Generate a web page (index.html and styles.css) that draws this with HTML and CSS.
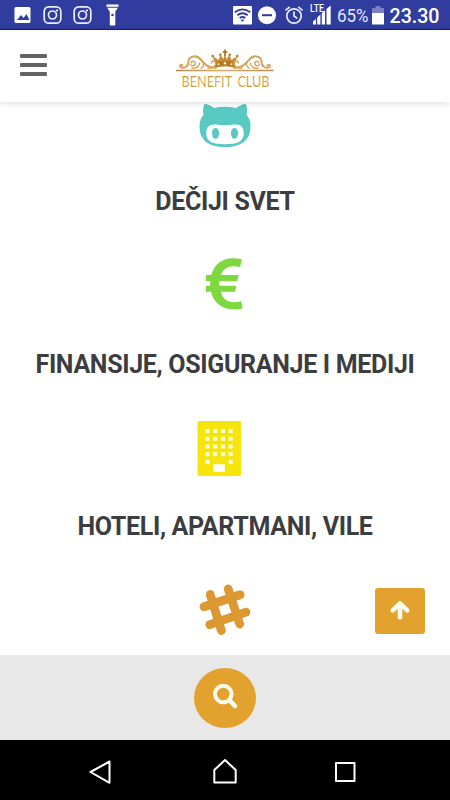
FILE: index.html
```html
<!DOCTYPE html>
<html lang="sr">
<head>
<meta charset="utf-8">
<title>Benefit Club</title>
<link rel="stylesheet" href="styles.css">
</head>
<body>
<div class="screen">
  <div class="status">
    <svg class="status-left" width="120" height="30" viewBox="0 0 120 30">
      <rect x="14.500" y="7" width="16" height="16" rx="1.500" fill="#fff"/>
      <path d="M17 20l4-5 2.500 3 3-4 3 6z" fill="#303c9e"/>
      <g fill="none" stroke="#e9ebff" stroke-width="1.700">
        <rect x="44.200" y="6.800" width="16.600" height="16.400" rx="4.500"/><circle cx="52.500" cy="15" r="4"/>
        <rect x="74.200" y="6.800" width="16.600" height="16.400" rx="4.500"/><circle cx="82.500" cy="15" r="4"/>
      </g>
      <circle cx="57" cy="10.500" r="1.100" fill="#fff"/><circle cx="87" cy="10.500" r="1.100" fill="#fff"/>
      <path d="M106.500 4.500h12v2.300h-12zM107.200 7.800h10.600l-2.500 4V25.500h-5.500V11.800z" fill="#fff"/>
      <circle cx="112.500" cy="15" r="1.300" fill="#303c9e"/>
    </svg>
    <div class="status-right">
      <svg width="110" height="30" viewBox="225 0 110 30">
        <rect x="233" y="6" width="19" height="18.500" rx="1" fill="#fff"/>
        <g fill="none" stroke="#303c9e" stroke-width="1.900"><path d="M234.800 12.200q7.700-5.600 15.400 0M237.300 15.200q5.200-3.900 10.400 0M239.700 18.100q2.800-2.200 5.600 0"/></g>
        <path d="M240.700 19.500h3.600l-1.800 2.500z" fill="#303c9e"/>
        <circle cx="267" cy="15.200" r="9" fill="#fff"/><path d="M262 15.200h10" stroke="#303c9e" stroke-width="2"/>
        <g fill="none" stroke="#e9ebff" stroke-width="1.700"><circle cx="294" cy="16" r="7.200"/><path d="M294 11.500V16l3.300 2.400M285.500 10.300l4.200-3.500M302.500 10.300l-4.200-3.500"/></g>
        <text class="lte" x="310" y="12" textLength="14" lengthAdjust="spacingAndGlyphs">LTE</text>
        <path d="M313 24.500v-3l3-2.500v5.500zM317.200 24.500v-7l3.200-3v10zM321.800 24.500V13.200l3.200-3v14.300zM326.500 24.500V9l4.200-3.500v19z" fill="#fff"/>
      </svg>
      <svg width="115" height="30" viewBox="335 0 115 30">
        <text class="percent" x="337" y="22" textLength="31.500" lengthAdjust="spacingAndGlyphs">65%</text>
        <path d="M372 8h3.500V6h5v2h3.500v5h-12z" fill="#7881c5"/><path d="M372 13h12v11.500h-12z" fill="#fff"/>
        <text class="clock" x="389.500" y="23" textLength="50" lengthAdjust="spacingAndGlyphs">23.30</text>
      </svg>
    </div>
  </div>

  <header class="header">
    <div class="menu"><i></i><i></i><i></i></div>
    <svg class="logo" width="110" height="50" viewBox="170 45 110 50">
      <defs>
        <linearGradient id="gold" x1="0" y1="0" x2="0" y2="1"><stop offset="0" stop-color="#b77a22"/><stop offset=".5" stop-color="#e0b555"/><stop offset="1" stop-color="#b98b35"/></linearGradient>
        <linearGradient id="line" x1="0" y1="0" x2="1" y2="0"><stop offset="0" stop-color="#b88a55"/><stop offset=".5" stop-color="#dfb063"/><stop offset="1" stop-color="#b88a55"/></linearGradient>
      </defs>
      <path d="M215.300 64.500L212.700 56l5.800 4 2-5 3 4 1.500-5 1.500 5 3-4 2 5 5.800-4-2.600 8.500q-9.700-3-19.400 0z" fill="#c78e31"/>
      <path d="M215 62.300q10-3 20 0v5.500q-10-3-20 0z" fill="#b87a20"/>
      <path d="M224.200 49.500h1.600v1.700h1.700v1.500h-1.700v3.500h-1.600v-3.500h-1.700v-1.500h1.700z" fill="#ad6f1b"/>
      <g fill="#b87a20"><circle cx="212.700" cy="56" r="1.300"/><circle cx="220.300" cy="54.700" r="1.300"/><circle cx="229.700" cy="54.700" r="1.300"/><circle cx="237.300" cy="56" r="1.300"/></g>
      <g fill="#fff0c8"><circle cx="218.500" cy="64.200" r="1"/><circle cx="225" cy="63.300" r="1.200"/><circle cx="231.500" cy="64.200" r="1"/></g>
      <g id="scroll" fill="none" stroke="#d4a55b" stroke-linecap="round">
        <path d="M182.500 65.500c-1.200-1.900-3.700.5-1.700 1.800 3.500 1.500 7.700-1.200 7.700-5.600 0-6.200 9-7.200 12.500-1.900 3.500 5 8 8.700 15 7.900" stroke-width="2"/>
        <path d="M190.500 64.500c1.200 2.300 5 1.500 4.800-1.200-.2-2.600-4-2.700-4-.3M196 57c6 1 8 9 16 10.500M201 68.200c2-1.200 3-3.300 2.300-5.200M208 68.200c4.800 0 8.200-2 7.600-5.500-.5-2.500-4.300-2.200-4 .3M192 68.300c5 0 7-1.600 7.500-5" stroke-width="1.400"/>
      </g>
      <use href="#scroll" transform="matrix(-1 0 0 1 450 0)"/>
      <path d="M176 69.800h97.500v1.500H176z" fill="url(#line)"/>
      <text class="brand" x="181.500" y="87" textLength="88" lengthAdjust="spacingAndGlyphs" fill="url(#gold)">BENEFIT CLUB</text>
    </svg>
  </header>

  <main class="list">
    <section class="item">
      <svg width="90" height="60" viewBox="180 95 90 60">
        <path d="M204.500 104c3.300 0 6.700 1.800 9.500 4q11-2.400 22 0c2.800-2.200 6.500-4 9.800-4 1.600 3.500 1.700 7.500.8 10.700 3 3.500 3.900 7.200 3.900 11.300 0 14-8.500 21-25.500 21s-25.500-7-25.500-21c0-4.100 1-7.800 4-11.300-.9-3.200-.7-7.200 1-10.700z" fill="#58c9c3"/>
        <path d="M214 124.500c4 0 7 .8 11 .8s7-.8 11-.8c5 0 7.800 3.300 7.800 8.500 0 9-6.800 11.200-18.800 11.200s-18.800-2.200-18.800-11.200c0-5.200 2.800-8.500 7.800-8.500z" fill="#fff"/>
        <ellipse cx="215.500" cy="133.300" rx="3.600" ry="5.500" fill="#58c9c3"/><ellipse cx="234.500" cy="133.300" rx="3.600" ry="5.500" fill="#58c9c3"/>
      </svg>
      <h2>DEČIJI SVET</h2>
    </section>
    <section class="item">
      <svg width="90" height="60" viewBox="180 258 90 60">
        <path d="M242 259.300l-1.900 7.700q-15.100-3.500-19.300 8h17.700l-1.200 6.200h-18v4.500h17l-1.200 6.100h-14.400c2.800 9.500 10 12 20.500 9.400l1.500 7.300c-16.500 3.600-28.500-3-31.700-16.700h-5v-6.100h4.200v-4.500H206V275h5.200c4.100-14 15.400-19.400 30.800-15.700z" fill="#7ed83f"/>
      </svg>
      <h2>FINANSIJE, OSIGURANJE I MEDIJI</h2>
    </section>
    <section class="item">
      <svg width="90" height="60" viewBox="180 420 90 60">
        <rect x="197.500" y="421" width="43.500" height="55" rx="1.800" fill="#f5e50c"/>
        <path d="M205.500 431h4M213.200 431h4M221 431h4M228.700 431h4M205.500 438.800h4M213.200 438.800h4M221 438.800h4M228.700 438.800h4M205.500 446.600h4M213.200 446.600h4M221 446.600h4M228.700 446.600h4M205.500 454.300h4M213.200 454.300h4M221 454.300h4M228.700 454.300h4M205.500 462h4M228.700 462h4" stroke="#fffde0" stroke-width="4"/>
        <rect x="213.200" y="464.200" width="11.600" height="7.600" rx=".7" fill="#fff"/>
      </svg>
      <h2>HOTELI, APARTMANI, VILE</h2>
    </section>
    <section class="item">
      <svg width="90" height="60" viewBox="180 582.500 90 60">
        <path d="M210.200 594l11.200 36M228.200 588.500l11.500 35M204 606.200l36.200-11.900M209.800 624.200l36.200-12.500" fill="none" stroke="#dc9932" stroke-width="8.800" stroke-linecap="round"/>
      </svg>
    </section>
    <a class="to-top">
      <svg width="50" height="46" viewBox="375 587.500 50 46"><path d="M400 617v-12M392.800 609.800l7.200-7 7.200 7" fill="none" stroke="#fffbed" stroke-width="4.600" stroke-linecap="round" stroke-linejoin="round"/></svg>
    </a>
  </main>

  <footer class="footer">
    <div class="search">
      <svg width="62" height="60" viewBox="194 667.500 62 60"><circle cx="223.300" cy="693.500" r="8.300" fill="none" stroke="#fffbed" stroke-width="4"/><path d="M229.300 699.500l5.700 6" stroke="#fffbed" stroke-width="4.500" stroke-linecap="round"/></svg>
    </div>
  </footer>
  <nav class="nav">
    <svg width="310" height="60" viewBox="70 740 310 60"><g fill="none" stroke="#fff" stroke-width="2" stroke-linejoin="round"><path d="M109.500 761.500v21.300L90.500 772zM214.300 782.500V770l10.700-10 10.700 10v12.500z"/><rect x="336" y="763" width="18.500" height="18"/></g></svg>
  </nav>
</div>
</body>
</html>
```
FILE: styles.css
```css
* { box-sizing: border-box; }
body { margin: 0; font-family: Roboto, "Liberation Sans", sans-serif; background: #fff; }
.screen { width: 450px; height: 800px; display: flex; flex-direction: column; overflow: hidden; }
.status { height: 30px; flex: none; display: flex; justify-content: space-between; background: #303c9e; border-bottom: 1px solid #18206e; }
.status-right { display: flex; }
.lte { font-size: 10.5px; fill: #fff; font-weight: 500; }
.percent { font-size: 18.5px; fill: #e4e7ff; }
.clock { font-size: 21px; font-weight: 500; fill: #fff; }
.header { position: relative; z-index: 1; height: 72px; flex: none; display: grid; grid-template-columns: 170px 110px 170px; align-items: start; background: #fff; box-shadow: 0 1px 7px rgba(0, 0, 0, .15); }
.menu { display: flex; flex-direction: column; gap: 5px; padding: 24px 0 0 20px; }
.menu i { width: 27px; height: 4px; background: #636363; border-radius: 1px; }
.logo { margin-top: 15px; overflow: visible; }
.brand { font-family: Lato, sans-serif; font-size: 15.5px; font-weight: 400; word-spacing: 3px; }
.list { position: relative; height: 553px; flex: none; overflow: hidden; background: #fff; }
.item { height: 162.5px; display: flex; flex-direction: column; align-items: center; }
.item:first-child { margin-top: -7px; }
.item svg { flex: none; }
.item h2 { margin: 32px 0 0; font-size: 25px; line-height: 30px; font-weight: 700; letter-spacing: -.33px; color: #3d3d3f; white-space: nowrap; }
.to-top { position: absolute; right: 25px; bottom: 21.5px; width: 50px; height: 46px; border-radius: 3px; background: #e3a22d; }
.to-top svg { display: block; }
.footer { height: 85px; flex: none; display: flex; align-items: center; justify-content: center; background: #e8e8e8; }
.search { width: 62px; height: 60px; border-radius: 50%; background: #e3a22d; }
.nav { height: 60px; flex: none; display: flex; justify-content: center; background: #000; }
```
